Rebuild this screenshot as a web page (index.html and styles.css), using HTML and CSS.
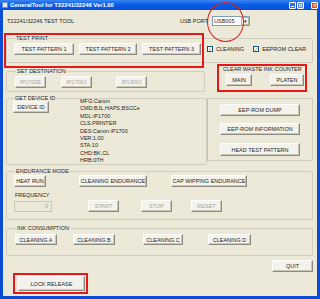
FILE: index.html
```html
<!DOCTYPE html>
<html lang="en">
<head>
<link rel="stylesheet" href="styles.css">
</head>
<body>
  <div class="window">
    <div class="titlebar">
      <span class="app-icon"></span>
      <span class="title">GeneralTool for T22241/32246 Ver1.00</span>
      <span class="caption-btns">
        <span class="cap cap-min"><i></i></span>
        <span class="cap cap-max"><i></i></span>
        <span class="cap cap-close">&#x2715;</span>
      </span>
    </div>

    <div class="client">
      <div class="header">
        <span class="tool-name">T22241/32246 TEST TOOL</span>
        <span class="usb-label">USB PORT</span>
        <div class="combo">
          <span class="combo-text">USB005</span>
          <span class="combo-arrow">&#x25BE;</span>
        </div>
      </div>

      <fieldset class="group test-print">
        <legend>TEST PRINT</legend>
        <div class="row">
          <button class="btn w60">TEST PATTERN 1</button>
          <button class="btn w58 ml5">TEST PATTERN 2</button>
          <button class="btn w59 ml5">TEST PATTERN 3</button>
          <label class="check ml6"><span class="box">&#x2713;</span>CLEANING</label>
          <label class="check ml-auto"><span class="box">&#x2713;</span>EEPROM CLEAR</label>
        </div>
      </fieldset>

      <div class="row-2">
        <fieldset class="group set-dest">
          <legend>SET DESTINATION</legend>
          <div class="row">
            <button class="btn w31" disabled>IP1700E</button>
            <button class="btn w31 ml15" disabled>IP1700J</button>
            <button class="btn w31 ml24" disabled>IP1300J</button>
          </div>
        </fieldset>
        <div class="mark clear-mark">
          <fieldset class="group clear-ink">
            <legend>CLEAR WASTE INK COUNTER</legend>
            <div class="row clear-btns">
              <button class="btn w26">MAIN</button>
              <button class="btn w34 ml18">PLATEN</button>
            </div>
          </fieldset>
        </div>
      </div>

      <div class="row-3">
        <fieldset class="group device">
          <legend>GET DEVICE ID</legend>
          <div class="row top">
            <button class="btn w36">DEVICE ID</button>
            <div class="id-text">
              <div>MFG:Canon</div>
              <div>CMD:BJL,HAPS,BSCCe</div>
              <div>MDL:iP1700</div>
              <div>CLS:PRINTER</div>
              <div>DES:Canon iP1700</div>
              <div>VER:1.00</div>
              <div>STA:10</div>
              <div>CHD:BK,CL</div>
              <div>HRB:0TH</div>
            </div>
          </div>
        </fieldset>
        <div class="eeprom">
          <button class="btn w80">EEP-ROM DUMP</button>
          <button class="btn w80">EEP-ROM INFORMATION</button>
          <button class="btn w80">HEAD TEST PATTERN</button>
        </div>
      </div>

      <fieldset class="group endurance">
        <legend>ENDURANCE MODE</legend>
        <div class="row">
          <button class="btn w32">HEAT RUN</button>
          <button class="btn w68 ml33">CLEANING ENDURANCE</button>
          <button class="btn w76 ml24">CAP WIPPING ENDURANCE</button>
        </div>
        <div class="freq-label">FREQUENCY</div>
        <div class="row">
          <div class="field">0</div>
          <button class="btn w31 ml36" disabled>START</button>
          <button class="btn w31 ml22" disabled>STOP</button>
          <button class="btn w31 ml19" disabled>RESET</button>
        </div>
      </fieldset>

      <fieldset class="group ink">
        <legend>INK CONSUMPTION</legend>
        <div class="row">
          <button class="btn w42">CLEANING A</button>
          <button class="btn w42 ml16">CLEANING B</button>
          <button class="btn w40 ml28">CLEANING C</button>
          <button class="btn w43 ml25">CLEANING D</button>
        </div>
      </fieldset>

      <div class="quit-row">
        <button class="btn w41">QUIT</button>
      </div>

      <div class="mark lock-mark">
        <button class="btn lock">LOCK RELEASE</button>
      </div>

      <!-- red annotations drawn over the dialog -->
      <div class="mark test-mark"></div>
      <div class="usb-circle"></div>
    </div>
  </div>
</body>
</html>
```

FILE: styles.css
```css
* {
  box-sizing: border-box;
}

body {
  margin: 0;
  font-family: "Liberation Sans", Arial, sans-serif;
  font-size: 5.5px;
  color: #262626;
}

.window {
  width: 320px;
  height: 299px;
  display: flex;
  flex-direction: column;
  background: #0a4cd6;
  overflow: hidden;
}

.titlebar {
  height: 10px;
  display: flex;
  align-items: center;
  padding: 0 2px;
  background: linear-gradient(#3a86f4, #0b5ce6 45%, #0850d8);
  color: #fff;
}

.app-icon {
  width: 6px;
  height: 6px;
  background: #e6e6e6;
  border: 1px solid #6a8fd0;
  margin-right: 2px;
}

.title {
  font-weight: bold;
  font-size: 6px;
  letter-spacing: -0.1px;
}

.caption-btns {
  margin-left: auto;
  display: flex;
  gap: 1px;
}

.cap {
  width: 7px;
  height: 7px;
  border: 1px solid #fff;
  border-radius: 1px;
  background: #2f6ff0;
  display: flex;
  align-items: flex-end;
  justify-content: center;
  color: #fff;
  font-size: 5px;
  line-height: 5px;
}

.cap i {
  display: block;
  width: 3px;
  height: 1px;
  background: #fff;
  margin-bottom: 1px;
}

.cap-max {
  background: #5d8ff2;
}

.cap-max i {
  width: 3px;
  height: 3px;
  border: 1px solid #c6d6f8;
  background: none;
}

.cap-close {
  margin-left: 6px;
  background: #e0552e;
  align-items: center;
}

.client {
  flex: 1;
  margin: 0 3px 3px 3px;
  background: #ece9d8;
  position: relative;
}

.header {
  height: 21px;
  display: flex;
  align-items: center;
  padding-left: 4px;
}

.usb-label {
  margin-left: auto;
  margin-right: 4px;
}

.combo {
  width: 38px;
  height: 10px;
  margin-right: 67px;
  display: flex;
  background: #fff;
  border: 1px solid #7f9db9;
}

.combo-text {
  flex: 1;
  display: flex;
  align-items: center;
  padding-left: 1px;
  background: #fff;
}

.combo-arrow {
  width: 8px;
  display: flex;
  align-items: center;
  justify-content: center;
  border: 1px solid #b8b6a8;
  background: #f1efe6;
  font-size: 5px;
}

.group {
  margin: 0;
  border: 1px solid #d0cebf;
  border-radius: 2px;
  padding: 2px 6px 6px 7px;
}

.group legend {
  padding: 0 1px;
  margin-left: 1px;
  line-height: 6px;
  height: 6px;
  white-space: nowrap;
}

.row {
  display: flex;
  align-items: center;
}

.row.top {
  align-items: flex-start;
}

.btn {
  height: 12px;
  padding: 0;
  border: 1px solid;
  border-color: #fdfdfb #8d8b80 #8d8b80 #fdfdfb;
  box-shadow: inset -1px -1px 0 #c9c6b6;
  background: #f3f2ec;
  font: inherit;
  color: #262626;
  white-space: nowrap;
  display: flex;
  align-items: center;
  justify-content: center;
}

.btn:disabled {
  color: #a7a596;
}

.w26 { width: 26px; }
.w31 { width: 31px; }
.w32 { width: 32px; }
.w34 { width: 34px; }
.w36 { width: 36px; }
.w40 { width: 40px; }
.w41 { width: 41px; }
.w42 { width: 42px; }
.w43 { width: 43px; }
.w58 { width: 58px; }
.w59 { width: 59px; }
.w60 { width: 60px; }
.w68 { width: 68px; }
.w76 { width: 76px; }
.w80 { width: 80px; }

.ml5 { margin-left: 5px; }
.ml6 { margin-left: 6px; }
.ml15 { margin-left: 15px; }
.ml16 { margin-left: 16px; }
.ml18 { margin-left: 18px; }
.ml19 { margin-left: 19px; }
.ml22 { margin-left: 22px; }
.ml24 { margin-left: 24px; }
.ml25 { margin-left: 25px; }
.ml28 { margin-left: 28px; }
.ml33 { margin-left: 33px; }
.ml36 { margin-left: 36px; }
.ml-auto { margin-left: auto; margin-right: 2px; }

/* test print */
.test-print {
  margin: 4px 4px 0 3px;
  padding: 2px 4px 7px 7px;
}

.check {
  display: flex;
  align-items: center;
  gap: 3px;
}

.check .box {
  width: 6px;
  height: 6px;
  border: 1px solid #1c5180;
  background: #fff;
  color: #21a121;
  font-size: 5px;
  line-height: 4px;
  display: flex;
  justify-content: center;
}

/* destination + clear ink */
.row-2 {
  display: flex;
  align-items: flex-start;
  margin-top: 1px;
}

.set-dest {
  width: 199px;
  margin: 4px 0 0 3px;
  padding: 2px 6px 3px 8px;
  height: 24px;
}

.mark {
  border: 2px solid #e81818;
}

.clear-mark {
  margin-left: 12px;
  width: 90px;
  height: 28px;
  padding: 0 1px;
}

.clear-ink {
  border-color: transparent;
  padding: 2px 0 0 1px;
}

.clear-ink legend {
  margin-left: 0;
}

.clear-btns {
  padding-left: 4px;
}

/* device id */
.row-3 {
  display: flex;
  align-items: flex-start;
  margin-top: 3px;
}

.device {
  width: 201px;
  height: 70px;
  margin-left: 3px;
  padding: 0 4px 0 6px;
}

.id-text {
  margin-left: 31px;
  margin-top: -3px;
  line-height: 7.4px;
}

.eeprom {
  width: 106px;
  height: 63px;
  margin-top: 3px;
  border: 1px solid #d0cebf;
  border-left-color: #c4c2b3;
  display: flex;
  flex-direction: column;
  align-items: center;
  padding-top: 5px;
  gap: 7px;
}

.eeprom .btn:last-child {
  height: 13px;
  margin-top: 1px;
}

/* endurance */
.endurance {
  margin: 3px 4px 0 3px;
  height: 52px;
  padding: 1px 4px 0 7px;
}

.freq-label {
  margin: 5px 0 2px 1px;
  line-height: 6px;
}

.field {
  width: 38px;
  height: 11px;
  border: 1px solid #c9c7ba;
  background: #ece9d8;
  color: #a7a596;
  text-align: right;
  padding-right: 3px;
  line-height: 9px;
}

/* ink consumption */
.ink {
  margin: 5px 4px 0 3px;
  height: 31px;
  padding: 3px 4px 0 8px;
}

.ink .btn {
  height: 11px;
}

.quit-row {
  display: flex;
  justify-content: flex-end;
  padding-right: 4px;
  margin-top: 4px;
}

.lock-mark {
  width: 75px;
  height: 21px;
  margin: 1px 0 0 10px;
  padding: 1px 2px 0 3px;
}

.btn.lock {
  width: 67px;
  height: 15px;
}

/* annotations */
.test-mark {
  position: absolute;
  left: 1px;
  top: 23px;
  width: 200px;
  height: 35px;
}

.usb-circle {
  position: absolute;
  left: 204px;
  top: -8px;
  width: 37px;
  height: 40px;
  border: 1px solid #e02020;
  border-radius: 50%;
}
```
